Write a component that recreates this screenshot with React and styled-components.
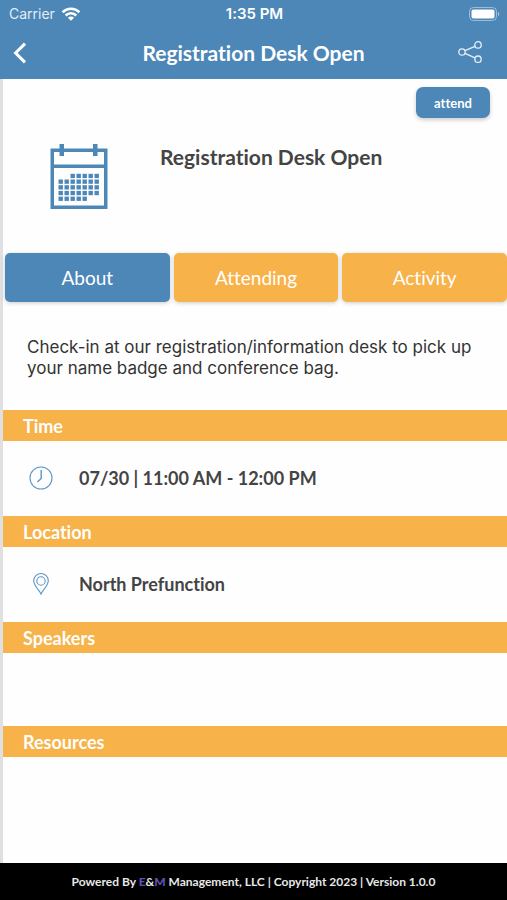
import React, { useState } from 'react'
// Style
import styled, { createGlobalStyle } from 'styled-components'

const blue = '#4c87b7'
const orange = '#f7b24a'

const GlobalStyle = createGlobalStyle`
    * {
        box-sizing: border-box;
    }
    body {
        margin: 0;
        background: #fff;
        font-family: Lato, "Open Sans", sans-serif;
        font-variant-ligatures: none;
    }
    button {
        border: 0;
        padding: 0;
        background: none;
        font-family: inherit;
        font-variant-ligatures: none;
        cursor: pointer;
    }
    svg {
        display: block;
    }
`

// Icons
const WifiIcon = () => (
    <svg width="20" height="14" viewBox="0 0 20 14" fill="none" stroke="#fff" strokeWidth="2.6">
        <path d="M1.6 5.2a12 12 0 0 1 16.8 0" />
        <path d="M4.7 8.5a7.5 7.5 0 0 1 10.6 0" />
        <path d="M10 13.8 6.9 10.7a4.4 4.4 0 0 1 6.2 0Z" fill="#fff" stroke="none" />
    </svg>
)

const BatteryIcon = () => (
    <svg width="31" height="14" viewBox="0 0 31 14">
        <rect x="0.5" y="0.5" width="27" height="13" rx="4" fill="none" stroke="#fff" strokeOpacity="0.45" />
        <rect x="2.5" y="2.5" width="23" height="9" rx="2" fill="#fff" />
        <path d="M29 4.8v4.4c1.7-.8 1.7-3.6 0-4.4Z" fill="#fff" fillOpacity="0.5" />
    </svg>
)

const BackIcon = () => (
    <svg width="14" height="22" viewBox="0 0 14 22" fill="none" stroke="#fff" strokeWidth="3">
        <path d="M12 1.6 2.6 11 12 20.4" />
    </svg>
)

const ShareIcon = () => (
    <svg width="24" height="24" viewBox="0 0 24 24" fill="none" stroke="#e6eff6" strokeWidth="1.3">
        <circle cx="4" cy="11" r="3.2" />
        <circle cx="20" cy="3.9" r="3.2" />
        <circle cx="20" cy="18.2" r="3.2" />
        <path d="M7 9.7 17 5.3M7 12.3 17 16.8" />
    </svg>
)

// first and last filled column of every week
const weeks = [[2, 6], [0, 6], [0, 6], [0, 6], [0, 4]]

const CalendarIcon = () => (
    <svg width="58" height="66" viewBox="0 0 58 66" fill={blue}>
        <path fillRule="evenodd" d="M0.5 4.5h57v60.5h-57ZM4 8v12.5h50V8ZM4 24v37.5h50V24Z" />
        <rect x="9.5" y="0" width="4.5" height="12" />
        <rect x="43" y="0" width="4.5" height="12" />
        {weeks.map(([first, last], row) => (
            [...Array(last - first + 1)].map((_, index) => (
                <rect
                    key={`${row}-${index}`}
                    x={8.5 + (first + index) * 6}
                    y={29.8 + row * 5.7}
                    width="4.4"
                    height="4.3"
                />
            ))
        ))}
    </svg>
)

const ClockIcon = () => (
    <svg width="24" height="24" viewBox="0 0 24 24" fill="none" stroke="#5b96c8">
        <circle cx="12" cy="12" r="11" strokeWidth="1.1" />
        <path d="M12.2 4v8.5L8.4 16" strokeWidth="1.4" />
    </svg>
)

const PinIcon = () => (
    <svg width="24" height="24" viewBox="0 0 24 24" fill="none" stroke="#5b96c8" strokeWidth="1.1">
        <path d="M12 22C10.5 18.5 4.7 13.5 4.7 8.8a7.3 7.3 0 0 1 14.6 0C19.3 13.5 13.5 18.5 12 22Z" />
        <circle cx="12" cy="9" r="4.2" />
    </svg>
)

const tabs = ['About', 'Attending', 'Activity']

const App = () => {

    const [active, setActive] = useState('About')

  return (
    <Page>
        <GlobalStyle />

        <Header>
            <StatusBar>
                <Carrier>Carrier <WifiIcon /></Carrier>
                <Clock>1:35 PM</Clock>
                <Battery><BatteryIcon /></Battery>
            </StatusBar>
            <NavBar>
                <NavButton aria-label="Back"><BackIcon /></NavButton>
                <NavTitle>Registration Desk Open</NavTitle>
                <NavButton aria-label="Share" $right><ShareIcon /></NavButton>
            </NavBar>
        </Header>

        <Content>
            <Actions>
                <AttendButton>attend</AttendButton>
            </Actions>

            <Summary>
                <CalendarIcon />
                <SummaryTitle>Registration Desk Open</SummaryTitle>
            </Summary>

            <Tabs>
                {tabs.map( tab => (
                    <Tab key={tab} $active={tab === active} onClick={() => setActive(tab)}>
                        {tab}
                    </Tab>
                ))}
            </Tabs>

            <Description>
                Check-in at our registration/information desk to pick up your name badge and conference bag.
            </Description>

            <SectionTitle>Time</SectionTitle>
            <Detail><ClockIcon /> 07/30 | 11:00 AM - 12:00 PM</Detail>

            <SectionTitle>Location</SectionTitle>
            <Detail><PinIcon /> North Prefunction</Detail>

            <SectionTitle>Speakers</SectionTitle>
            <Empty />

            <SectionTitle>Resources</SectionTitle>
            <Empty />
        </Content>

        <Footer>
            <p>Powered By <b>E</b>&amp;<b>M</b> Management, LLC | Copyright 2023 | Version 1.0.0</p>
        </Footer>
    </Page>
  )
}

const Page = styled.div`
    min-height: 100vh;
    display: flex;
    flex-direction: column;
`

const Header = styled.header`
    background: ${blue};
    color: #fff;
`

const StatusBar = styled.div`
    display: grid;
    grid-template-columns: 1fr auto 1fr;
    align-items: center;
    height: 27px;
    padding: 0 7px 0 9px;
    font-family: Inter, sans-serif;
    font-size: 14px;
`

const Carrier = styled.span`
    display: flex;
    align-items: center;
    gap: 6px;
    color: #e3edf5;
`

const Clock = styled.span`
    font-size: 15px;
    font-weight: 600;
`

const Battery = styled.span`
    justify-self: end;
`

const NavBar = styled.nav`
    display: grid;
    grid-template-columns: 1fr auto 1fr;
    align-items: center;
    height: 52px;
    padding: 0 25px 0 13px;
`

const NavButton = styled.button`
    justify-self: ${({ $right }) => $right ? 'end' : 'start'};
`

const NavTitle = styled.h1`
    margin: 0 0 0 12px;
    font-size: 21px;
    font-weight: 700;
    line-height: 28px;
`

const Content = styled.main`
    flex: 1;
    border-left: 3px solid #e0e0e2;
    background: #fefefe;
`

const Actions = styled.div`
    display: flex;
    justify-content: flex-end;
    padding: 8px 17px 0;
`

const AttendButton = styled.button`
    width: 74px;
    height: 31px;
    border-radius: 7px;
    background: ${blue};
    box-shadow: 0 2px 4px rgba(0, 0, 0, 0.2);
    color: #fff;
    font-size: 13px;
    font-weight: 700;
`

const Summary = styled.section`
    display: flex;
    gap: 52px;
    padding: 26px 20px 43px 47px;
`

const SummaryTitle = styled.h2`
    margin: 0;
    color: #444;
    font-size: 21px;
    font-weight: 700;
    line-height: 26px;
`

const Tabs = styled.div`
    display: grid;
    grid-template-columns: repeat(3, 1fr);
    gap: 4px;
    padding-left: 2px;
`

const Tab = styled.button`
    height: 49px;
    padding-bottom: 1px;
    border-radius: 5px;
    background: ${({ $active }) => $active ? blue : orange};
    box-shadow: 0 1px 4px rgba(0, 0, 0, 0.2);
    color: #fff;
    font-size: 19px;
`

const Description = styled.p`
    margin: 0;
    padding: 35px 24px 31px;
    color: #333;
    font-family: Inter, sans-serif;
    font-size: 17px;
    line-height: 21px;
`

const SectionTitle = styled.h3`
    margin: 0;
    padding: 1px 20px 0;
    background: ${orange};
    color: #fff;
    font-size: 18px;
    font-weight: 700;
    line-height: 30px;
`

const Detail = styled.div`
    display: flex;
    align-items: center;
    gap: 26px;
    height: 75px;
    padding: 0 26px 2px;
    color: #444;
    font-size: 18px;
    font-weight: 700;
`

const Empty = styled.div`
    height: 73px;
`

const Footer = styled.footer`
    display: flex;
    align-items: center;
    justify-content: center;
    height: 37px;
    background: #000;
    color: #e8e8e8;
    font-size: 12px;
    font-weight: 700;

    p {
        margin: 0;
    }
    b {
        color: #5f50b4;
    }
`

export default App
